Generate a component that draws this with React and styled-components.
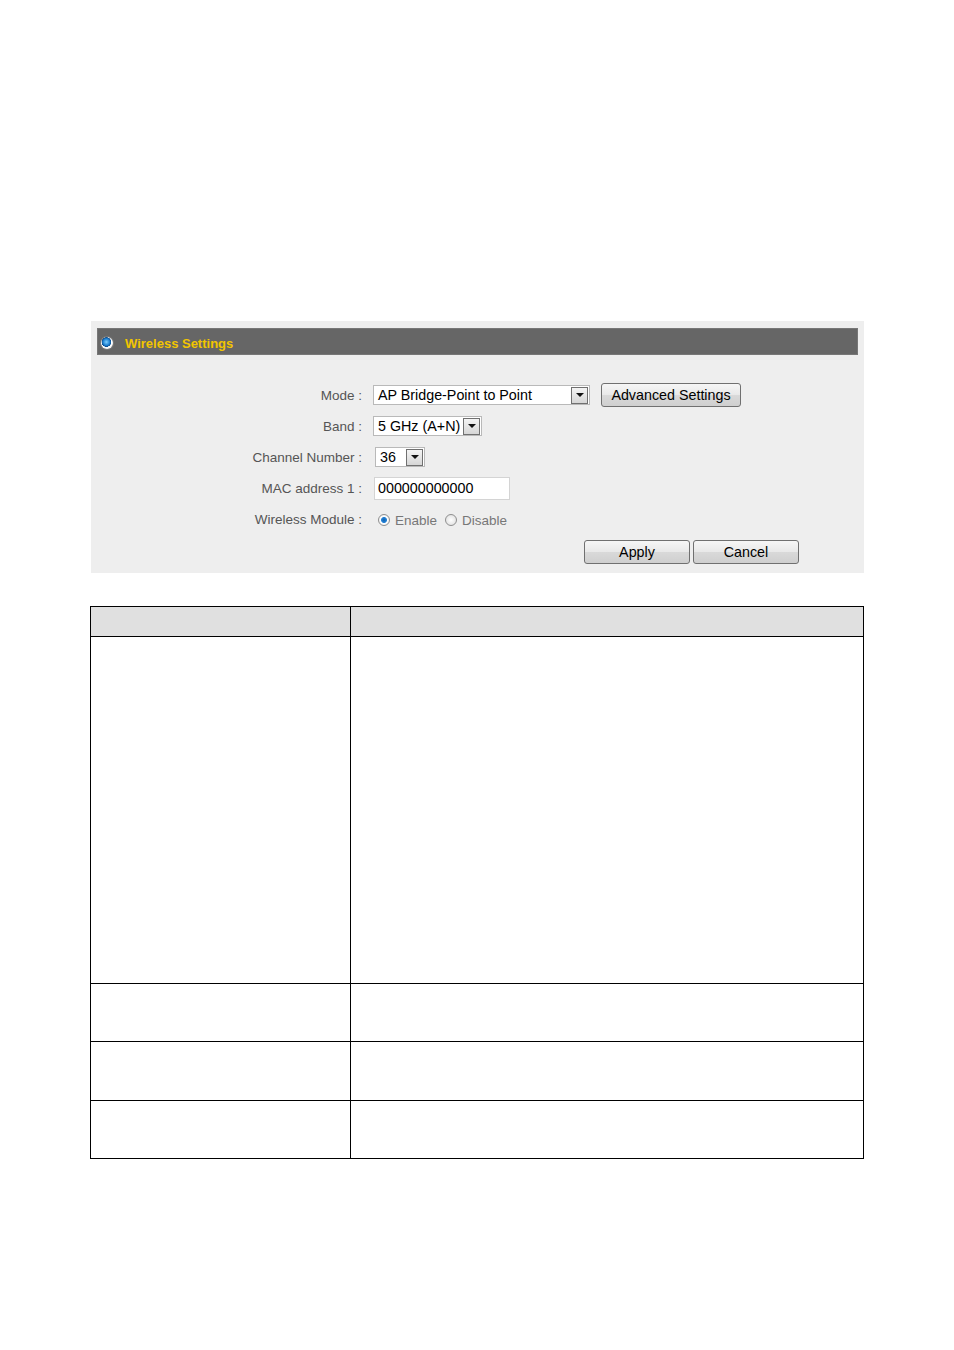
import styled, { createGlobalStyle } from "styled-components";

const Global = createGlobalStyle`
  html, body {
    margin: 0;
    padding: 0;
    background: #ffffff;
  }
  body {
    font-family: "Liberation Sans", Arial, sans-serif;
  }
`;

const Page = styled.div`
  width: 954px;
  height: 1350px;
  padding-top: 321px;
  box-sizing: border-box;
`;

const Panel = styled.div`
  margin-left: 91px;
  width: 773px;
  background: #eeeeee;
  padding: 7px 6px 8px;
  box-sizing: border-box;
`;

const HeaderBar = styled.div`
  height: 27px;
  background: #666666;
  border: 1px solid #777;
  box-sizing: border-box;
  display: flex;
  align-items: center;
  padding-left: 3px;
  gap: 12px;
`;

const Bullet = styled.span`
  width: 12px;
  height: 12px;
  border-radius: 50%;
  margin-top: 2px;
  background: radial-gradient(circle at 45% 42%, #7fd0ff 0, #1c7fd0 35%, #0b4f92 48%, #ffffff 52%, #e4e4e4 100%);
  box-shadow: 0 0 0 1px #7a7a7a;
`;

const Title = styled.span`
  color: #f2c500;
  font-weight: bold;
  font-size: 13px;
  margin-top: 4px;
`;

const Form = styled.div`
  display: grid;
  grid-template-columns: 265px 1fr;
  grid-auto-rows: 30px;
  row-gap: 1px;
  column-gap: 11px;
  padding-top: 25px;
  align-items: center;
`;

const Label = styled.div`
  text-align: right;
  font-size: 13.5px;
  color: #555;
  white-space: nowrap;
`;

const Controls = styled.div`
  display: flex;
  align-items: center;
  gap: 11px;
  padding-left: ${(p) => p.$indent || 0}px;
`;

const SelectBox = styled.div`
  width: ${(p) => p.$w}px;
  height: 20px;
  box-sizing: border-box;
  background: #fff;
  border: 1px solid #b9b9b9;
  display: flex;
  align-items: center;
  justify-content: space-between;
  padding-left: 4px;
  padding-right: 1px;
  font-size: 14.3px;
  color: #000;
`;

const Arrow = styled.span`
  width: 17px;
  height: 17px;
  box-sizing: border-box;
  border: 1px solid #707070;
  background: linear-gradient(#f4f4f4, #d6d6d6);
  display: flex;
  align-items: center;
  justify-content: center;
  &::after {
    content: "";
    border-left: 4px solid transparent;
    border-right: 4px solid transparent;
    border-top: 4px solid #111;
  }
`;

const TextInput = styled.div`
  width: 136px;
  height: 23px;
  box-sizing: border-box;
  background: #fff;
  border: 1px solid #d4d4d4;
  display: flex;
  align-items: center;
  padding-left: 3px;
  font-size: 14.3px;
  color: #000;
  margin-left: 1px;
`;

const Button = styled.div`
  width: ${(p) => p.$w}px;
  height: 24px;
  box-sizing: border-box;
  border: 1px solid #707070;
  border-radius: 3px;
  background: linear-gradient(#f6f6f6 0%, #e8e8e8 50%, #d9d9d9 51%, #cfcfcf 100%);
  display: flex;
  align-items: center;
  justify-content: center;
  font-size: 14.3px;
  color: #000;
`;

const RadioGroup = styled.div`
  display: flex;
  align-items: center;
  padding-left: 5px;
  padding-top: 2px;
  font-size: 13.5px;
  color: #777;
`;

const Radio = styled.span`
  width: 12px;
  height: 12px;
  border-radius: 50%;
  box-sizing: border-box;
  border: 1px solid #8f8f8f;
  margin-right: 5px;
  margin-left: ${(p) => p.$ml || 0}px;
  background: ${(p) =>
    p.$on
      ? "radial-gradient(circle, #0d5fae 0, #2b86d8 38%, #ffffff 46%, #e2e2e2 100%)"
      : "radial-gradient(circle, #ffffff 0, #dadada 100%)"};
`;

const ButtonRow = styled.div`
  grid-column: 1 / -1;
  display: flex;
  justify-content: flex-end;
  gap: 3px;
  padding-right: 59px;
  padding-top: 4px;
`;

const Table = styled.table`
  margin-top: 33px;
  margin-left: 90px;
  width: 774px;
  border-collapse: collapse;
  table-layout: fixed;
`;

const HeadCell = styled.th`
  border: 1px solid #000;
  background: #e0e0e0;
  height: 29px;
  padding: 0;
`;

const Cell = styled.td`
  border: 1px solid #000;
  height: ${(p) => p.$h}px;
  padding: 0;
`;

const rows = [346, 57, 58, 57];

export default function App() {
  return (
    <>
      <Global />
      <Page>
        <Panel>
          <HeaderBar>
            <Bullet />
            <Title>Wireless Settings</Title>
          </HeaderBar>
          <Form>
            <Label>Mode :</Label>
            <Controls>
              <SelectBox $w={217}>
                AP Bridge-Point to Point
                <Arrow />
              </SelectBox>
              <Button $w={140}>Advanced Settings</Button>
            </Controls>

            <Label>Band :</Label>
            <Controls>
              <SelectBox $w={109}>
                5 GHz (A+N)
                <Arrow />
              </SelectBox>
            </Controls>

            <Label>Channel Number :</Label>
            <Controls $indent={2}>
              <SelectBox $w={50}>
                36
                <Arrow />
              </SelectBox>
            </Controls>

            <Label>MAC address 1 :</Label>
            <Controls>
              <TextInput>000000000000</TextInput>
            </Controls>

            <Label>Wireless Module :</Label>
            <RadioGroup>
              <Radio $on />
              Enable
              <Radio $ml={8} />
              Disable
            </RadioGroup>

            <ButtonRow>
              <Button $w={106}>Apply</Button>
              <Button $w={106}>Cancel</Button>
            </ButtonRow>
          </Form>
        </Panel>

        <Table>
          <colgroup>
            <col style={{ width: 260 }} />
            <col />
          </colgroup>
          <thead>
            <tr>
              <HeadCell />
              <HeadCell />
            </tr>
          </thead>
          <tbody>
            {rows.map((h, i) => (
              <tr key={i}>
                <Cell $h={h} />
                <Cell $h={h} />
              </tr>
            ))}
          </tbody>
        </Table>
      </Page>
    </>
  );
}
